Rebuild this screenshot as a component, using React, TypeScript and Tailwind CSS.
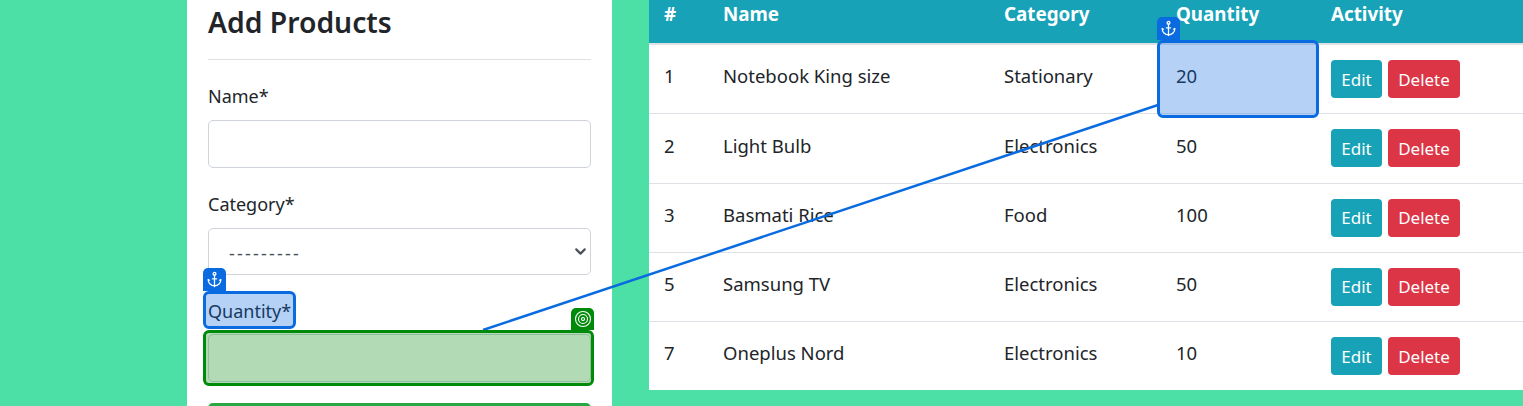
import { Anchor, ChevronDown, Target } from "lucide-react";

const products = [
  { id: 1, name: "Notebook King size", category: "Stationary", quantity: 20 },
  { id: 2, name: "Light Bulb", category: "Electronics", quantity: 50 },
  { id: 3, name: "Basmati Rice", category: "Food", quantity: 100 },
  { id: 5, name: "Samsung TV", category: "Electronics", quantity: 50 },
  { id: 7, name: "Oneplus Nord", category: "Electronics", quantity: 10 },
];

const rowHeights = ["h-[69px]", "h-[70px]", "h-[69px]", "h-[69px]", "h-[69px]"];

function AddProducts() {
  return (
    <div className="w-[425px] h-[406px] shrink-0 bg-white px-[21px] overflow-hidden text-[#212529]">
      <h2 className="h-[60px] pt-[2px] border-b border-[#dee2e6] text-[28.3px] leading-[40px] font-semibold">Add Products</h2>
      <label className="block mt-[24px] h-[24px] text-[18px] leading-[24px]">Name*</label>
      <input className="block mt-[12px] w-full h-[48px] bg-white border border-[#ced4da] rounded-[5px]" />
      <label className="block mt-[24px] h-[24px] text-[18px] leading-[24px]">Category*</label>
      <div className="relative mt-[12px]">
        <select className="block w-full h-[47px] appearance-none bg-white border border-[#ced4da] rounded-[5px] pl-[20px] pt-[4px] text-[18px] tracking-[2.2px] text-[#495057]">
          <option>---------</option>
        </select>
        <ChevronDown size={17} strokeWidth={3} className="absolute right-[2px] top-[15px] text-[#495057]" />
      </div>
      <label className="block mt-[24px] h-[24px] text-[18px] leading-[24px]">Quantity*</label>
      <input className="block mt-[11px] w-full h-[48px] bg-white border border-[#ced4da] rounded-[5px]" />
      <div className="mt-[21px] h-[48px] bg-[#28a745] rounded-[5px]" />
    </div>
  );
}

function ProductTable() {
  return (
    <div className="w-[874px] h-[390px] bg-white overflow-hidden">
      <table className="w-full table-fixed border-collapse text-[#212529] text-[18.5px]">
        <colgroup>
          <col className="w-[59px]" />
          <col className="w-[281px]" />
          <col className="w-[172px]" />
          <col className="w-[155px]" />
          <col />
        </colgroup>
        <thead>
          <tr className="h-[44px] bg-[#17a2b8] text-white border-b-[2px] border-[#dee2e6]">
            {["#", "Name", "Category", "Quantity", "Activity"].map((h) => (
              <th key={h} className="px-[15px] pb-[16px] text-left font-bold text-[18.8px] leading-[24px] align-top">
                <span className="block pt-[2px]">{h}</span>
              </th>
            ))}
          </tr>
        </thead>
        <tbody>
          {products.map((p, i) => (
            <tr key={p.id} className={`${rowHeights[i]} border-b border-[#dee2e6] last:border-b-0`}>
              <td className="px-[15px] pb-[5px]">{p.id}</td>
              <td className="px-[15px] pb-[5px]">{p.name}</td>
              <td className="px-[15px] pb-[5px]">{p.category}</td>
              <td className="px-[15px] pb-[5px]">{p.quantity}</td>
              <td className="px-[15px]">
                <div className="flex gap-[6px]">
                  <button className="w-[51px] h-[38px] pt-[1px] rounded-[4px] bg-[#17a2b8] text-white text-[17px]">Edit</button>
                  <button className="w-[72px] h-[38px] pt-[1px] rounded-[4px] bg-[#dc3545] text-white text-[17px]">Delete</button>
                </div>
              </td>
            </tr>
          ))}
        </tbody>
      </table>
    </div>
  );
}

// highlight overlays from the element picker
function AnchorBox({ className }: { className: string }) {
  return (
    <div className={`absolute border-[3px] border-[#0a6be0] bg-[#0a6be0]/30 rounded-[6px] ${className}`}>
      <div className="absolute -left-[3px] -top-[26px] w-[23px] h-[23px] bg-[#0a6be0] rounded-t-[5px] flex items-center justify-center text-white">
        <Anchor size={17} strokeWidth={1.8} />
      </div>
    </div>
  );
}

export default function App() {
  return (
    <div className="relative w-[1523px] h-[406px] overflow-hidden bg-[#4cdfa6] font-['Noto_Sans',sans-serif]">
      <div className="flex gap-[37px] pl-[187px]">
        <AddProducts />
        <ProductTable />
      </div>

      <svg className="absolute inset-0 pointer-events-none" width="1523" height="406">
        <line x1="483" y1="330" x2="1158" y2="105" stroke="#0a6be0" strokeWidth="2.5" />
      </svg>

      <AnchorBox className="left-[203px] top-[291px] w-[93px] h-[38px]" />
      <AnchorBox className="left-[1157px] top-[40px] w-[162px] h-[78px]" />

      <div className="absolute left-[203px] top-[330px] w-[391px] h-[56px] border-[3px] border-[#008a0a] bg-[#008a0a]/30 rounded-[6px]">
        <div className="absolute -right-[3px] -top-[25px] w-[23px] h-[22px] bg-[#008a0a] rounded-t-[5px] flex items-center justify-center text-white">
          <Target size={18} strokeWidth={1.5} />
        </div>
      </div>
    </div>
  );
}
